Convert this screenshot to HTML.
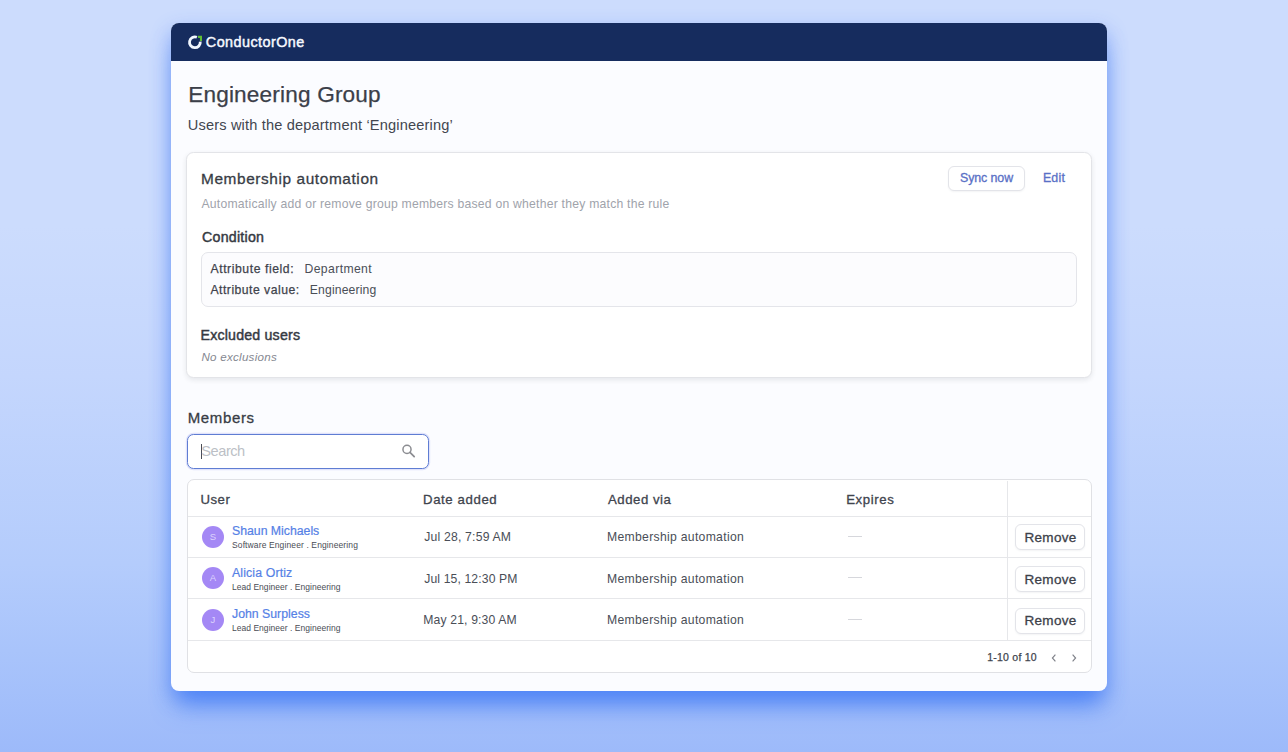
<!DOCTYPE html>
<html lang="en">
<head>
<meta charset="utf-8">
<title>Engineering Group - ConductorOne</title>
<style>
*{box-sizing:border-box;margin:0;padding:0}
html,body{width:1288px;height:752px;overflow:hidden}
body{font-family:"Liberation Sans",sans-serif;color:#3a3f4a;position:relative;
background:linear-gradient(180deg,#ccdcfd 0%,#ccdcfd 30%,#c4d6fd 50%,#b4ccfc 75%,#a9c4fb 86.5%,#9dbafa 100%);}
.abs{position:absolute}
.card{position:absolute;left:171px;top:23px;width:936px;height:668px;border-radius:8px;background:#fbfcff;
box-shadow:0 20px 24px -6px rgba(48,112,245,.6),0 8px 20px 0 rgba(64,118,245,.45);}
.hdr{position:absolute;left:0;top:0;width:936px;height:37.8px;background:#162c5e;border-radius:8px 8px 0 0}
.panel{position:absolute;background:#fff;border:1px solid #e4e5ea;border-radius:9px}
.t{position:absolute;white-space:nowrap;line-height:1}
.hl{position:absolute;height:1px;background:#e6e7ea}
.vl{position:absolute;width:1px;background:#e6e7ea}
.btn{position:absolute;border:1px solid #e3e4e9;border-radius:6px;background:#fff;box-shadow:0 1px 2px rgba(50,60,90,.06)}
.av{position:absolute;width:22px;height:22px;border-radius:50%;background:#a488f5;color:#ddd4fc;font-size:9.5px;line-height:22px;text-align:center}
.dash{position:absolute;width:14px;height:1.2px;background:#d6d7dc}
</style>
</head>
<body>
<div class="card">
  <div class="hdr"></div>
  <svg class="abs" style="left:14px;top:9px" width="20" height="20" viewBox="185 32 20 20">
    <path d="M196.9 37.3 A5.4 5.4 0 1 0 200.25 41.6" fill="none" stroke="#f1f7ff" stroke-width="2.8"/>
    <path d="M198 35.7 L202 35.7 L202 40.9 L199.9 40.9 L199.9 37.9 L198 37.9 Z" fill="#5fbe35"/>
  </svg>

  <div class="panel" id="p1" style="left:14.7px;top:128.5px;width:906px;height:226.2px;border-radius:7.5px;border-color:#e3e4e8;box-shadow:0 2px 5px rgba(40,45,60,.10)"></div>
  <div class="btn" id="syncb" style="left:777.2px;top:143px;width:76.8px;height:24.5px"></div>
  <div class="panel" id="p2" style="left:30px;top:229px;width:876px;height:55px;background:#fcfcfe;border-radius:7px"></div>

  <div class="abs" id="search" style="left:15.7px;top:410.6px;width:242.1px;height:35px;border:1.4px solid #5f7dd3;border-radius:6.5px;background:#fff;box-shadow:0 0 0 1.2px rgba(130,140,235,.22)"></div>
  <div class="abs" style="left:29.5px;top:420.6px;width:1.3px;height:15.3px;background:#4a4d55"></div>
  <svg class="abs" style="left:228px;top:419px" width="20" height="20" viewBox="399 442 20 20">
    <circle cx="407" cy="449.4" r="4.05" fill="none" stroke="#8b8c91" stroke-width="1.5"/>
    <path d="M410 452.4 L414.2 456.6" stroke="#8b8c91" stroke-width="1.7" stroke-linecap="round"/>
  </svg>

  <div class="panel" id="tbl" style="left:16.3px;top:456.2px;width:904.5px;height:194px;border-radius:7px;border-color:#e0e1e5"></div>
  <div class="hl" style="left:17px;top:492.8px;width:902.5px"></div>
  <div class="hl" style="left:17px;top:533.7px;width:902.5px"></div>
  <div class="hl" style="left:17px;top:575.2px;width:902.5px"></div>
  <div class="hl" style="left:17px;top:616.7px;width:902.5px"></div>
  <div class="vl" style="left:836px;top:457.5px;height:159.5px"></div>

  <div class="av" style="left:30.8px;top:503px">S</div>
  <div class="av" style="left:30.8px;top:544.4px">A</div>
  <div class="av" style="left:30.8px;top:586px">J</div>
  <div class="dash" style="left:677px;top:512.8px"></div>
  <div class="dash" style="left:677px;top:554px"></div>
  <div class="dash" style="left:677px;top:595.6px"></div>
  <div class="btn" id="r1" style="left:844.3px;top:501.4px;width:69.7px;height:26px"></div>
  <div class="btn" id="r2" style="left:844.3px;top:543px;width:69.7px;height:26px"></div>
  <div class="btn" id="r3" style="left:844.3px;top:584.6px;width:69.7px;height:26px"></div>

  <svg class="abs" style="left:877.8px;top:629.5px" width="10" height="10" viewBox="0 0 10 10"><path d="M6.4 1.6 L3.4 5 L6.4 8.4" fill="none" stroke="#7e8088" stroke-width="1.15"/></svg>
  <svg class="abs" style="left:898.3px;top:629.5px" width="10" height="10" viewBox="0 0 10 10"><path d="M3.6 1.6 L6.6 5 L3.6 8.4" fill="none" stroke="#7e8088" stroke-width="1.15"/></svg>

  <div class="t" id="logo" style="left:34.80px;top:12.11px;font-size:14.4px;letter-spacing:0.445px;color:#f6f9ff;-webkit-text-stroke:0.45px currentColor">ConductorOne</div>
  <div class="t" id="title" style="left:17.20px;top:60.62px;font-size:22.6px;letter-spacing:0.175px;color:#3b3f49;-webkit-text-stroke:0.25px currentColor">Engineering Group</div>
  <div class="t" id="subtitle" style="left:16.75px;top:94.64px;font-size:14.6px;letter-spacing:0.164px;color:#42464f">Users with the department ‘Engineering’</div>
  <div class="t" id="ma" style="left:30.00px;top:148.21px;font-size:15.4px;letter-spacing:0.600px;color:#383c45;-webkit-text-stroke:0.3px currentColor">Membership automation</div>
  <div class="t" id="madesc" style="left:30.50px;top:175.17px;font-size:12.2px;letter-spacing:0.225px;color:#a0a3ab">Automatically add or remove group members based on whether they match the rule</div>
  <div class="t" id="cond" style="left:31.00px;top:206.98px;font-size:14.2px;letter-spacing:0.250px;color:#363a43;-webkit-text-stroke:0.45px currentColor">Condition</div>
  <div class="t" id="af" style="left:39.50px;top:239.92px;font-size:12.2px;letter-spacing:0.567px;color:#3f434c;-webkit-text-stroke:0.25px currentColor">Attribute field:</div>
  <div class="t" id="afv" style="left:133.50px;top:239.92px;font-size:12.2px;letter-spacing:0.389px;color:#4a4e57">Department</div>
  <div class="t" id="avl" style="left:39.50px;top:261.17px;font-size:12.2px;letter-spacing:0.483px;color:#3f434c;-webkit-text-stroke:0.25px currentColor">Attribute value:</div>
  <div class="t" id="avv" style="left:138.75px;top:261.17px;font-size:12.2px;letter-spacing:0.150px;color:#4a4e57">Engineering</div>
  <div class="t" id="excl" style="left:29.50px;top:305.48px;font-size:14.2px;letter-spacing:0.192px;color:#363a43;-webkit-text-stroke:0.45px currentColor">Excluded users</div>
  <div class="t" id="noex" style="left:30.50px;top:327.93px;font-size:11.6px;letter-spacing:0.250px;color:#858891;font-style:italic">No exclusions</div>
  <div class="t" id="members" style="left:16.75px;top:386.55px;font-size:15px;letter-spacing:0.625px;color:#383c45;-webkit-text-stroke:0.3px currentColor">Members</div>
  <div class="t" id="stext" style="left:30.30px;top:420.89px;font-size:14.6px;letter-spacing:-0.460px;color:#bcbfc6">Search</div>
  <div class="t" id="th1" style="left:29.50px;top:469.58px;font-size:13.2px;letter-spacing:0.500px;color:#40444d;-webkit-text-stroke:0.3px currentColor">User</div>
  <div class="t" id="th2" style="left:252.00px;top:469.58px;font-size:13.2px;letter-spacing:0.611px;color:#40444d;-webkit-text-stroke:0.3px currentColor">Date added</div>
  <div class="t" id="th3" style="left:437.00px;top:469.58px;font-size:13.2px;letter-spacing:0.531px;color:#40444d;-webkit-text-stroke:0.3px currentColor">Added via</div>
  <div class="t" id="th4" style="left:675.20px;top:469.58px;font-size:13.2px;letter-spacing:0.600px;color:#40444d;-webkit-text-stroke:0.3px currentColor">Expires</div>
  <div class="t" id="pg" style="left:816.20px;top:628.51px;font-size:10.5px;letter-spacing:0.244px;color:#40444d;-webkit-text-stroke:0.25px currentColor">1-10 of 10</div>
  <div class="t" id="sync" style="left:789.00px;top:149.40px;font-size:12.4px;letter-spacing:-0.086px;color:#5970c6;-webkit-text-stroke:0.3px currentColor">Sync now</div>
  <div class="t" id="edit" style="left:871.90px;top:149.40px;font-size:12.4px;letter-spacing:0.200px;color:#5970c6;-webkit-text-stroke:0.3px currentColor">Edit</div>
  <div class="t" id="n1" style="left:61.00px;top:501.84px;font-size:12.3px;letter-spacing:-0.019px;color:#5581e6;-webkit-text-stroke:0.2px currentColor">Shaun Michaels</div>
  <div class="t" id="s1" style="left:61.00px;top:517.80px;font-size:8.5px;letter-spacing:0.117px;color:#4a4d55">Software Engineer . Engineering</div>
  <div class="t" id="d1" style="left:253.25px;top:507.92px;font-size:12.2px;letter-spacing:0.196px;color:#4a4e57">Jul 28, 7:59 AM</div>
  <div class="t" id="v1" style="left:436.00px;top:507.92px;font-size:12.2px;letter-spacing:0.300px;color:#4a4e57">Membership automation</div>
  <div class="t" id="rt1" style="left:853.40px;top:508.07px;font-size:13.5px;letter-spacing:0.340px;color:#3d414a;-webkit-text-stroke:0.3px currentColor">Remove</div>
  <div class="t" id="n2" style="left:61.00px;top:544.34px;font-size:12.3px;letter-spacing:0.136px;color:#5581e6;-webkit-text-stroke:0.2px currentColor">Alicia Ortiz</div>
  <div class="t" id="s2" style="left:61.00px;top:560.30px;font-size:8.5px;letter-spacing:0.029px;color:#4a4d55">Lead Engineer . Engineering</div>
  <div class="t" id="d2" style="left:253.25px;top:550.42px;font-size:12.2px;letter-spacing:0.117px;color:#4a4e57">Jul 15, 12:30 PM</div>
  <div class="t" id="v2" style="left:436.00px;top:550.42px;font-size:12.2px;letter-spacing:0.300px;color:#4a4e57">Membership automation</div>
  <div class="t" id="rt2" style="left:853.40px;top:549.57px;font-size:13.5px;letter-spacing:0.340px;color:#3d414a;-webkit-text-stroke:0.3px currentColor">Remove</div>
  <div class="t" id="n3" style="left:61.00px;top:584.59px;font-size:12.3px;letter-spacing:0.000px;color:#5581e6;-webkit-text-stroke:0.2px currentColor">John Surpless</div>
  <div class="t" id="s3" style="left:61.00px;top:600.80px;font-size:8.5px;letter-spacing:0.029px;color:#4a4d55">Lead Engineer . Engineering</div>
  <div class="t" id="d3" style="left:252.25px;top:590.67px;font-size:12.2px;letter-spacing:0.143px;color:#4a4e57">May 21, 9:30 AM</div>
  <div class="t" id="v3" style="left:436.00px;top:590.67px;font-size:12.2px;letter-spacing:0.300px;color:#4a4e57">Membership automation</div>
  <div class="t" id="rt3" style="left:853.40px;top:590.77px;font-size:13.5px;letter-spacing:0.340px;color:#3d414a;-webkit-text-stroke:0.3px currentColor">Remove</div>
</div>
</body>
</html>
